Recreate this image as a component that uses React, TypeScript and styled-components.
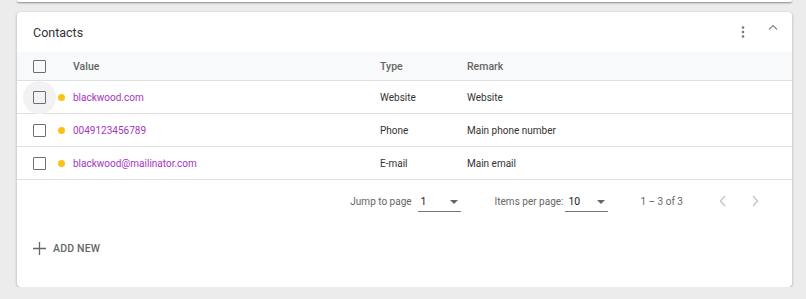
import React from 'react';
import styled, { createGlobalStyle } from 'styled-components';

const GlobalStyle = createGlobalStyle`
  html, body {
    margin: 0;
    padding: 0;
    background: #ececec;
    font-family: Roboto, "Liberation Sans", Arial, sans-serif;
  }
`;

const Page = styled.div`
  padding: 0 14px 0 17px;
`;

const PrevCard = styled.div`
  height: 2px;
  background: #fff;
  border-radius: 0 0 4px 4px;
  box-shadow: 0 1px 2px rgba(0, 0, 0, 0.45);
  margin-bottom: 10px;
`;

const Card = styled.div`
  background: #fff;
  border-radius: 4px;
  box-shadow: 0 1px 3px rgba(0, 0, 0, 0.3);
  height: 275px;
  display: flex;
  flex-direction: column;
`;

const CardHeader = styled.div`
  height: 40px;
  display: flex;
  align-items: center;
  padding: 0 4px 0 16px;
`;

const Title = styled.div`
  flex: 1;
  font-size: 12.5px;
  color: #333;
  padding-top: 1px;
`;

const IconButton = styled.button<{ $up?: boolean }>`
  border: 0;
  background: none;
  padding: 0;
  width: 30px;
  height: 30px;
  margin-top: ${(p) => (p.$up ? '-10px' : '0')};
  display: flex;
  align-items: center;
  justify-content: center;
  color: #777;
  cursor: pointer;
`;

const Row = styled.div<{ $head?: boolean }>`
  display: grid;
  grid-template-columns: 24px 16px 307px 87px 1fr;
  align-items: center;
  padding-left: 16px;
  height: ${(p) => (p.$head ? '28px' : '32px')};
  background: ${(p) => (p.$head ? '#f8f9fa' : '#fff')};
  border-bottom: 1px solid #e0e0e0;
  font-size: ${(p) => (p.$head ? '10.5px' : '10px')};
  font-weight: ${(p) => (p.$head ? 500 : 400)};
  color: ${(p) => (p.$head ? '#666' : '#333')};
`;

const CheckWrap = styled.div<{ $hover?: boolean }>`
  position: relative;
  width: 13px;
  height: 13px;
  &::before {
    content: '';
    display: ${(p) => (p.$hover ? 'block' : 'none')};
    position: absolute;
    left: -10px;
    top: -10px;
    width: 33px;
    height: 33px;
    border-radius: 50%;
    background: #f2f2f4;
  }
`;

const Box = styled.div`
  position: relative;
  width: 13px;
  height: 13px;
  box-sizing: border-box;
  border: 1.5px solid #6e6e6e;
  border-radius: 1px;
`;

const Dot = styled.span`
  width: 7px;
  height: 7px;
  border-radius: 50%;
  background: #fbc116;
  margin-left: 1px;
`;

const Link = styled.span`
  color: #a335c2;
`;

const Pager = styled.div`
  height: 42px;
  display: flex;
  align-items: center;
  justify-content: flex-end;
  padding-right: 21px;
  font-size: 10px;
  color: #666;
`;

const Select = styled.div<{ $gapL: number; $gapR: number }>`
  width: 43px;
  height: 19px;
  margin: 0 ${(p) => p.$gapR}px 0 ${(p) => p.$gapL}px;
  border-bottom: 1px solid #777;
  display: flex;
  align-items: center;
  justify-content: space-between;
  color: #222;
  font-size: 10.5px;
  padding: 0 2px 0 3px;
  box-sizing: border-box;
  position: relative;
  top: 1px;
`;

const Caret = styled.span`
  width: 0;
  height: 0;
  border-left: 4.5px solid transparent;
  border-right: 4.5px solid transparent;
  border-top: 4.5px solid #666;
  margin-right: 1px;
`;

const Range = styled.span`
  margin-right: 24px;
`;

const NavButton = styled.button`
  border: 0;
  background: none;
  padding: 0;
  width: 32px;
  height: 32px;
  display: flex;
  align-items: center;
  justify-content: center;
  color: #c4c4c4;
`;

const AddNew = styled.button`
  align-self: flex-start;
  margin: 20px 0 0 16px;
  border: 0;
  background: none;
  display: flex;
  align-items: center;
  gap: 7px;
  padding: 0;
  font-family: inherit;
  font-size: 10.5px;
  font-weight: 500;
  letter-spacing: 0.2px;
  color: #666;
`;

const rows = [
  { value: 'blackwood.com', type: 'Website', remark: 'Website' },
  { value: '0049123456789', type: 'Phone', remark: 'Main phone number' },
  { value: 'blackwood@mailinator.com', type: 'E-mail', remark: 'Main email' },
];

const Chevron = ({ d }: { d: string }) => (
  <svg width="10" height="14" viewBox="0 0 10 14" fill="none" stroke="currentColor" strokeWidth="1.4">
    <path d={d} />
  </svg>
);

export default function App() {
  return (
    <>
      <GlobalStyle />
      <Page>
        <PrevCard />
        <Card>
          <CardHeader>
            <Title>Contacts</Title>
            <IconButton>
              <svg width="4" height="12" viewBox="0 0 4 12" fill="#777">
                <circle cx="2" cy="1.5" r="1.3" />
                <circle cx="2" cy="6" r="1.3" />
                <circle cx="2" cy="10.5" r="1.3" />
              </svg>
            </IconButton>
            <IconButton $up>
              <svg width="10" height="6" viewBox="0 0 10 6" fill="none" stroke="#888" strokeWidth="1.2">
                <path d="M1 5.5 L5 1.5 L9 5.5" />
              </svg>
            </IconButton>
          </CardHeader>
          <Row $head>
            <CheckWrap>
              <Box />
            </CheckWrap>
            <span />
            <span>Value</span>
            <span>Type</span>
            <span>Remark</span>
          </Row>
          {rows.map((r, i) => (
            <Row key={r.value}>
              <CheckWrap $hover={i === 0}>
                <Box />
              </CheckWrap>
              <Dot />
              <Link>{r.value}</Link>
              <span>{r.type}</span>
              <span>{r.remark}</span>
            </Row>
          ))}
          <Pager>
            <span>Jump to page</span>
            <Select $gapL={6} $gapR={34}>
              1<Caret />
            </Select>
            <span>Items per page:</span>
            <Select $gapL={2} $gapR={32}>
              10<Caret />
            </Select>
            <Range>1 – 3 of 3</Range>
            <NavButton>
              <Chevron d="M7 2 L2.5 7 L7 12" />
            </NavButton>
            <NavButton>
              <Chevron d="M3 2 L7.5 7 L3 12" />
            </NavButton>
          </Pager>
          <AddNew>
            <svg width="13" height="13" viewBox="0 0 13 13" stroke="#666" strokeWidth="1.3">
              <path d="M6.5 0 V13 M0 6.5 H13" />
            </svg>
            ADD NEW
          </AddNew>
        </Card>
      </Page>
    </>
  );
}
